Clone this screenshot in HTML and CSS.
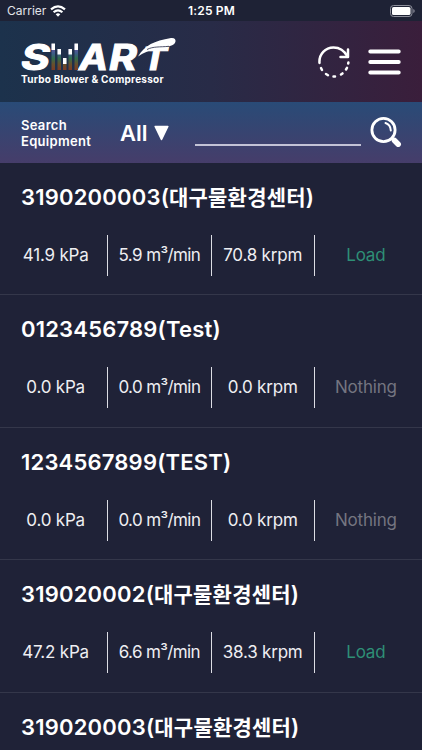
FILE: index.html
```html
<!DOCTYPE html>
<html lang="ko">
<head>
    <meta charset="UTF-8">
    <meta name="viewport" content="width=device-width, initial-scale=1.0">
    <title>SMART Turbo Blower &amp; Compressor</title>
    <link rel="stylesheet" href="styles.css">
</head>
<body>

    <!-- Status bar -->
    <div class="status-bar">
        <div class="carrier">
            <span>Carrier</span>
            <svg width="16" height="12" viewBox="0 0 16 12" fill="none" stroke="#fff" stroke-width="2.2">
                <path d="M1 4.4Q8 -1.8 15 4.4"/>
                <path d="M3.6 7.3Q8 3.3 12.4 7.3"/>
                <path d="M8 11.8L5.7 9.3Q8 7.4 10.3 9.3Z" fill="#fff" stroke="none"/>
            </svg>
        </div>
        <span class="time">1:25 PM</span>
        <svg class="battery" width="26" height="12" viewBox="0 0 26 12">
            <rect x="0.5" y="0.5" width="21.5" height="11" rx="3" fill="none" stroke="#8d8f9b"/>
            <rect x="2" y="2" width="18.5" height="8" rx="1.6" fill="#fff"/>
            <path d="M23.3 4v4q1.4-.6 1.4-2t-1.4-2z" fill="#8d8f9b"/>
        </svg>
    </div>

    <!-- Header -->
    <header class="header">
        <div class="brand">
            <svg class="logo" width="158" height="34" viewBox="0 0 158 34">
                <defs>
                    <linearGradient id="bars" gradientUnits="userSpaceOnUse" x1="0" y1="12" x2="0" y2="33">
                        <stop offset="0" stop-color="#5b559c"/>
                        <stop offset="0.22" stop-color="#3d5c87"/>
                        <stop offset="0.45" stop-color="#316d4e"/>
                        <stop offset="0.72" stop-color="#67512d"/>
                        <stop offset="1" stop-color="#7c3b25"/>
                    </linearGradient>
                </defs>
                <g class="logo-text">
                    <text x="1" y="32.5" textLength="29" lengthAdjust="spacingAndGlyphs">S</text>
                    <text x="59" y="32.5" textLength="29" lengthAdjust="spacingAndGlyphs">A</text>
                    <text x="89" y="32.5" textLength="28" lengthAdjust="spacingAndGlyphs">R</text>
                    <text class="logo-t" x="122" y="32.5" textLength="25" lengthAdjust="spacingAndGlyphs">T</text>
                </g>
                <path d="M31.5 7H35v26h-3.5zM37.5 12H41v21h-3.5zM43 22h3.5v11H43zM48.5 12H52v21h-3.5zM54.5 7H58v26h-3.5z" fill="url(#bars)"/>
                <path d="M31.5 6.5H35V13h-3.5zM37.5 12H41v5.5h-3.5zM43 21h3.5v6H43zM48.5 12H52v5.5h-3.5zM54.5 6.5H58V13h-3.5z" fill="#fff"/>
                <path d="M118 19.500C125 8 134 4 151 1C157.500 .2 157 7.500 150 9C141 11.500 130 11 118 19.500Z" fill="#fff"/>
                <path d="M127 12.500C133 9.300 140 10.200 149 9.300" fill="none" stroke="#272b47" stroke-width="0.800"/>
            </svg>
            <p class="tagline">Turbo Blower &amp; Compressor</p>
        </div>
        <div class="header-actions">
            <svg width="32" height="32" viewBox="0 0 32 32" fill="none" stroke="#fff" stroke-width="2.5" stroke-linecap="round" stroke-linejoin="round">
                <path d="M1.5 17C.8 8 7.5 1.5 15.5 1.5C22 1.5 26.5 5 29.5 10.5"/>
                <path d="M30 3.5v7.5h-7.5"/>
                <path d="M3 22l1 2M8 28l2 1.2M15.5 30.5h1.5M23 28.5l1.5-1.1M28 23.5l1-1.7M30.2 17.5l.2-1"/>
            </svg>
            <svg width="33" height="26" viewBox="0 0 33 26" stroke="#fff" stroke-width="4" stroke-linecap="round">
                <path d="M2.3 2.5h28.4M2.3 13h28.4M2.3 23.5h28.4"/>
            </svg>
        </div>
    </header>

    <!-- Search -->
    <div class="search-bar">
        <label class="search-label" for="search">Search<br>Equipment</label>
        <div class="filter">
            <span>All</span>
            <svg width="15" height="16" viewBox="0 0 15 16"><path d="M1.2 1.5h12.6L7.5 14.5z" fill="#fff" stroke="#fff" stroke-width="1.6" stroke-linejoin="round"/></svg>
        </div>
        <input type="text" id="search" class="search-input">
        <svg class="search-icon" width="32" height="31" viewBox="0 0 32 31" fill="none" stroke="#fff" stroke-linecap="round">
            <circle cx="13.5" cy="13" r="11.6" stroke-width="2.8"/>
            <path d="M15.5 6Q20.5 7.5 20.8 13.5" stroke-width="2"/>
            <path d="M22 21.5l2 2" stroke-width="3"/>
            <path d="M24.5 23.5l3.7 3.7" stroke-width="5.5"/>
        </svg>
    </div>

    <!-- Equipment list -->
    <div class="list">
        <div class="item">
            <h2>3190200003(<span class="ko">대구물환경센터</span>)</h2>
            <div class="values">
                <span>41.9 kPa</span>
                <span class="flow">5.9 m³/min</span>
                <span>70.8 krpm</span>
                <span class="load">Load</span>
            </div>
        </div>
        <div class="item">
            <h2>0123456789(Test)</h2>
            <div class="values">
                <span>0.0 kPa</span>
                <span class="flow">0.0 m³/min</span>
                <span>0.0 krpm</span>
                <span class="nothing">Nothing</span>
            </div>
        </div>
        <div class="item">
            <h2>1234567899(TEST)</h2>
            <div class="values">
                <span>0.0 kPa</span>
                <span class="flow">0.0 m³/min</span>
                <span>0.0 krpm</span>
                <span class="nothing">Nothing</span>
            </div>
        </div>
        <div class="item">
            <h2>319020002(<span class="ko">대구물환경센터</span>)</h2>
            <div class="values">
                <span>47.2 kPa</span>
                <span class="flow">6.6 m³/min</span>
                <span>38.3 krpm</span>
                <span class="load">Load</span>
            </div>
        </div>
        <div class="item">
            <h2>319020003(<span class="ko">대구물환경센터</span>)</h2>
        </div>
    </div>

</body>
</html>
```
FILE: styles.css
```css
* {
    margin: 0;
    padding: 0;
    box-sizing: border-box;
    font-family: Inter, 'Noto Sans CJK KR', sans-serif;
}

body {
    height: 750px;
    overflow: hidden;
    background: #1f2237;
    color: #fff;
}

/* Status bar */
.status-bar {
    display: grid;
    grid-template-columns: 1fr auto 1fr;
    align-items: center;
    height: 21px;
    padding: 0 6px 0 7px;
    font-size: 12px;
    line-height: 21px;
    background: #1e2235;
}

.carrier {
    display: flex;
    align-items: center;
    gap: 4px;
    color: #e3e4e9;
}

.time {
    font-weight: 600;
    letter-spacing: 0.2px;
}

.battery {
    justify-self: end;
}

/* Header */
.header {
    display: flex;
    justify-content: space-between;
    height: 81px;
    padding: 16px 21px 0 20px;
    background: linear-gradient(to right, #1c324c, #282b47 50%, #3a1e3b);
}

.logo {
    display: block;
    overflow: visible;
}

.logo-text {
    fill: #fff;
    stroke: #fff;
    stroke-width: 1px;
    font-size: 35px;
    font-weight: 700;
    font-style: italic;
}

.logo-t {
    font-size: 31px;
}

.tagline {
    padding: 1px 0 0 1px;
    font-size: 10px;
    font-weight: 700;
    line-height: 15px;
    letter-spacing: 0.25px;
    white-space: nowrap;
}

.header-actions {
    display: flex;
    align-items: center;
    gap: 18px;
    height: 49px;
}

/* Search */
.search-bar {
    display: flex;
    align-items: center;
    height: 61px;
    padding: 0 20px 0 21px;
    background: linear-gradient(to bottom, #294b77, #463d6a);
}

.search-label {
    width: 99px;
    font-size: 13px;
    font-weight: 600;
    line-height: 16px;
    letter-spacing: 0.3px;
}

.filter {
    display: flex;
    align-items: center;
    gap: 6px;
    width: 75px;
    font-size: 22px;
    font-weight: 600;
}

.search-input {
    width: 166px;
    height: 26px;
    margin-top: 1px;
    border: none;
    border-bottom: 2px solid #c3c3d6;
    outline: none;
    background: transparent;
    color: #fff;
    font-size: 16px;
}

.search-icon {
    margin-left: auto;
}

/* Equipment list */
.item {
    height: 132.4px;
    padding: 18px 5px 0 4px;
    border-bottom: 1px solid #34374a;
}

.item:last-child {
    height: auto;
    border-bottom: none;
}

.item h2 {
    height: 32px;
    padding-left: 17px;
    font-size: 22px;
    font-weight: 600;
    line-height: 32px;
    letter-spacing: 0.2px;
    white-space: nowrap;
}

.ko {
    font-size: 21px;
    letter-spacing: 0.2px;
}

.values {
    display: grid;
    grid-template-columns: repeat(4, 1fr);
    height: 40px;
    margin-top: 22px;
    color: #eeeef2;
    font-size: 17px;
    line-height: 41px;
    letter-spacing: -0.2px;
    text-align: center;
    white-space: nowrap;
}

.values span + span {
    border-left: 1px solid #dcdde4;
}

.values .flow {
    letter-spacing: -0.6px;
}

.values .load {
    color: #2e8f76;
}

.values .nothing {
    color: #747580;
}
```
